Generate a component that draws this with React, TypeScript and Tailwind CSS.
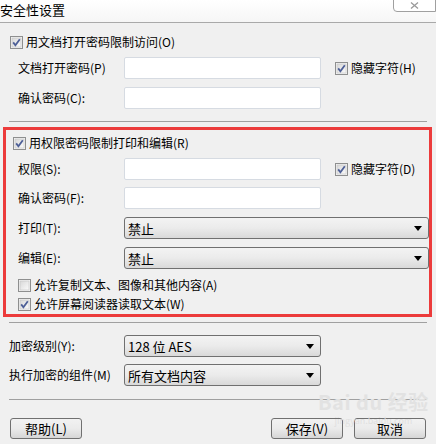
import React from 'react';

const Check = ({ checked }: { checked?: boolean }) => (
  <svg width="13" height="13" viewBox="0 0 13 13" className="shrink-0">
    <defs>
      <linearGradient id="cbg" x1="0" y1="0" x2="1" y2="1">
        <stop offset="0" stopColor="#d8d8d8" />
        <stop offset="1" stopColor="#fbfbfb" />
      </linearGradient>
    </defs>
    <rect x="0.5" y="0.5" width="12" height="12" fill="#f4f4f4" stroke="#8e8f8f" />
    <rect x="2" y="2" width="9" height="9" fill="url(#cbg)" stroke="#c4c4c4" strokeWidth="0.6" />
    {checked && <path d="M3.2 6.4 L5.4 9.2 L9.8 3.2" fill="none" stroke="#4d5f97" strokeWidth="1.8" />}
  </svg>
);

const CheckRow = ({ label, checked, className = '' }: { label: string; checked?: boolean; className?: string }) => (
  <div className={`flex items-center gap-[3px] h-[16px] ${className}`}>
    <Check checked={checked} />
    <span>{label}</span>
  </div>
);

const Input = ({ className = '' }: { className?: string }) => (
  <div className={`h-[22px] bg-white border border-[#d6dbe2] rounded-[2px] ${className}`} />
);

const Select = ({ value, className = '' }: { value: string; className?: string }) => (
  <div
    className={`h-[22px] flex items-center justify-between pl-[3px] pr-[6px] border border-[#707070] rounded-[3px] bg-gradient-to-b from-[#f3f3f3] via-[#ebebeb] to-[#d9d9d9] ${className}`}
  >
    <span className="text-[13px]">{value}</span>
    <svg width="8" height="5" viewBox="0 0 8 5"><path d="M0 0 H8 L4 5 Z" fill="#000" /></svg>
  </div>
);

const Btn = ({ label }: { label: string }) => (
  <div className="w-[72px] h-[21px] flex items-center justify-center border border-[#707070] rounded-[3px] bg-gradient-to-b from-[#f2f2f2] via-[#ebebeb] to-[#d6d6d6] text-[13px]">
    {label}
  </div>
);

export default function App() {
  return (
    <div
      className="relative w-[436px] h-[444px] bg-[#f0f0f0] overflow-hidden text-[12px] text-black leading-none"
      style={{ fontFamily: '"Noto Sans CJK SC", "Liberation Sans", sans-serif' }}
    >
      {/* Title bar */}
      <div className="relative h-[23px] border-b border-[#a9a9a9] bg-gradient-to-b from-white to-[#f6f6f6]">
        <span className="absolute left-0 top-[3px] text-[13px]">安全性设置</span>
        <div className="absolute right-0 top-[-1px] w-[43px] h-[13px] border border-[#a0a0a0] rounded-bl-[4px] bg-white flex items-center justify-center">
          <svg width="9" height="7" viewBox="0 0 9 7">
            <path d="M1 0.5 L8 6.5 M8 0.5 L1 6.5" stroke="#9a9a9a" strokeWidth="1.3" />
          </svg>
        </div>
      </div>

      <div className="flex flex-col">
        <CheckRow label="用文档打开密码限制访问(O)" checked className="mt-[11px] ml-[10px]" />

        <div className="flex items-center mt-[7px]">
          <span className="w-[124px] pl-[18px]">文档打开密码(P)</span>
          <Input className="w-[197px]" />
          <CheckRow label="隐藏字符(H)" checked className="ml-[14px]" />
        </div>
        <div className="flex items-center mt-[8px]">
          <span className="w-[124px] pl-[18px]">确认密码(C):</span>
          <Input className="w-[197px]" />
        </div>

        <div className="mt-[12px] mx-[9px] h-px bg-[#a0a0a0]" />

        {/* Permissions box */}
        <div className="mt-[5px] ml-[3px] w-[429px] h-[190px] border-[3px] border-[#ec3b3b] flex flex-col pt-[5px]">
          <CheckRow label="用权限密码限制打印和编辑(R)" checked className="ml-[7px]" />
          <div className="flex items-center mt-[7px]">
            <span className="w-[118px] pl-[12px]">权限(S):</span>
            <Input className="w-[197px]" />
            <CheckRow label="隐藏字符(D)" checked className="ml-[14px]" />
          </div>
          <div className="flex items-center mt-[7px]">
            <span className="w-[118px] pl-[12px]">确认密码(F):</span>
            <Input className="w-[197px]" />
          </div>
          <div className="flex items-center mt-[8px]">
            <span className="w-[118px] pl-[12px]">打印(T):</span>
            <Select value="禁止" className="w-[305px]" />
          </div>
          <div className="flex items-center mt-[8px]">
            <span className="w-[118px] pl-[12px]">编辑(E):</span>
            <Select value="禁止" className="w-[305px]" />
          </div>
          <CheckRow label="允许复制文本、图像和其他内容(A)" className="mt-[8px] ml-[12px]" />
          <CheckRow label="允许屏幕阅读器读取文本(W)" checked className="mt-[3px] ml-[12px]" />
        </div>

        <div className="mt-[5px] mx-[9px] h-px bg-[#a0a0a0]" />

        <div className="flex items-center mt-[12px]">
          <span className="w-[124px] pl-[9px]">加密级别(Y):</span>
          <Select value="128 位 AES" className="w-[197px]" />
        </div>
        <div className="flex items-center mt-[7px]">
          <span className="w-[124px] pl-[9px]">执行加密的组件(M)</span>
          <Select value="所有文档内容" className="w-[197px]" />
        </div>

        <div className="mt-[13px] mx-[9px] h-px bg-[#a0a0a0]" />

        <div className="flex items-center mt-[18px] px-[10px]">
          <Btn label="帮助(L)" />
          <div className="flex-1" />
          <Btn label="保存(V)" />
          <div className="w-[11px]" />
          <Btn label="取消" />
        </div>
      </div>

      {/* watermark */}
      <div className="absolute left-[318px] top-[392px] flex flex-col items-center pointer-events-none">
        <span className="text-[20px] font-bold text-[#e2e2e2] tracking-wide">Bai du 经验</span>
        <span className="text-[9px] text-[#e0e0e0] mt-[4px]">jingyan.baidu.com</span>
      </div>
    </div>
  );
}
